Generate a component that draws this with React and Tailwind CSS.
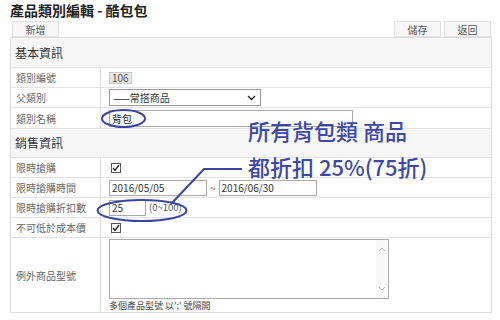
import React from "react";

const font = { fontFamily: '"Noto Sans CJK TC", "Noto Sans", sans-serif' };

function Check() {
  return (
    <span className="inline-flex h-[10px] w-[10px] items-center justify-center border border-[#555] bg-white">
      <svg width="8" height="8" viewBox="0 0 8 8">
        <path d="M1 4 L3 6.5 L7 1" fill="none" stroke="#222" strokeWidth="1.3" />
      </svg>
    </span>
  );
}

function Row({ label, h = "h-[20px]", children }) {
  return (
    <div className={`grid grid-cols-[90px_1fr] border-t border-[#e2e2e2] ${h}`}>
      <div className="flex items-center border-r border-[#e2e2e2] pl-[5px] text-[10px] text-[#666]">{label}</div>
      <div className="flex items-center pl-[8px] text-[10px] text-[#333]">{children}</div>
    </div>
  );
}

function Section({ title }) {
  return (
    <div className="flex h-[29px] items-center border-t border-[#e2e2e2] bg-[#f6f6f6] pl-[4px] text-[12px] text-[#333] first:border-t-0">
      {title}
    </div>
  );
}

function Btn({ children, w = "w-[47px]" }) {
  return (
    <button className={`flex h-[16px] items-center justify-center border border-[#e0e0e0] bg-[#f7f7f7] text-[10px] text-[#555] ${w}`}>
      {children}
    </button>
  );
}

export default function App() {
  return (
    <div className="relative h-[320px] w-[500px] overflow-hidden bg-white" style={font}>
      <div className="pl-[10px] pt-[1px] text-[14px] font-bold leading-[18px] text-[#222]">產品類別編輯 - 酷包包</div>

      <div className="mt-[2px] flex items-center justify-between pl-[12px] pr-[9px]">
        <Btn>新增</Btn>
        <div className="flex gap-[3px]">
          <Btn>儲存</Btn>
          <Btn>返回</Btn>
        </div>
      </div>

      <div className="ml-[10px] w-[482px] border border-[#dcdcdc]">
        <Section title="基本資訊" />
        <Row label="類別編號">
          <span className="flex h-[12px] items-center border border-[#c8c8c8] bg-[#e6e6e6] px-[2px] text-[10px] text-[#555]">106</span>
        </Row>
        <Row label="父類別">
          <div className="flex h-[17px] w-[152px] items-center justify-between border border-[#999] bg-white pl-[3px] pr-[4px] text-[10px] text-[#333]">
            <span>——常搭商品</span>
            <svg width="9" height="6" viewBox="0 0 9 6">
              <path d="M1 1 L4.5 4.5 L8 1" fill="none" stroke="#222" strokeWidth="1.3" />
            </svg>
          </div>
        </Row>
        <Row label="類別名稱" h="h-[21px]">
          <div className="flex h-[17px] w-[244px] items-center border border-[#aaa] bg-white pl-[2px] text-[10px] text-[#222]">背包</div>
        </Row>

        <Section title="銷售資訊" />
        <Row label="限時搶購">
          <span className="ml-[2px]"><Check /></span>
        </Row>
        <Row label="限時搶購時間">
          <div className="flex items-center">
            <div className="flex h-[16px] w-[98px] items-center border border-[#aaa] pl-[2px] text-[10px]">2016/05/05</div>
            <span className="px-[3px] text-[10px] text-[#555]">~</span>
            <div className="flex h-[16px] w-[98px] items-center border border-[#aaa] pl-[2px] text-[10px]">2016/06/30</div>
          </div>
        </Row>
        <Row label="限時搶購折扣數">
          <div className="flex items-center">
            <div className="flex h-[16px] w-[37px] items-center border border-[#aaa] pl-[2px] text-[10px]">25</div>
            <span className="pl-[3px] text-[9.5px] text-[#555]">(0~100)</span>
          </div>
        </Row>
        <Row label="不可低於成本價">
          <span className="ml-[2px]"><Check /></span>
        </Row>
        <div className="grid h-[75px] grid-cols-[90px_1fr] border-t border-[#e2e2e2]">
          <div className="flex items-center border-r border-[#e2e2e2] pl-[5px] text-[10px] text-[#666]">例外商品型號</div>
          <div className="pl-[8px] pt-[1px]">
            <div className="flex h-[60px] w-[280px] justify-end border border-[#aaa] bg-white">
              <div className="flex w-[12px] flex-col items-center justify-between bg-[#f8f8f8] py-[7px]">
                <svg width="8" height="5" viewBox="0 0 8 5">
                  <path d="M1 4 L4 1 L7 4" fill="none" stroke="#bbb" strokeWidth="1" />
                </svg>
                <svg width="8" height="5" viewBox="0 0 8 5">
                  <path d="M1 1 L4 4 L7 1" fill="none" stroke="#bbb" strokeWidth="1" />
                </svg>
              </div>
            </div>
            <div className="mt-[1px] text-[9px] leading-[12px] text-[#444]">多個產品型號 以';' 號隔開</div>
          </div>
        </div>
      </div>

      <svg className="absolute left-0 top-0" width="500" height="320" viewBox="0 0 500 320">
        <ellipse cx="123.5" cy="118.5" rx="21.5" ry="8.5" fill="none" stroke="#3a45a0" strokeWidth="2" />
        <ellipse cx="142" cy="210.5" rx="44.5" ry="10.5" fill="none" stroke="#3a45a0" strokeWidth="2" />
        <polyline points="171,204 204,169 242,169" fill="none" stroke="#3a45a0" strokeWidth="2" />
      </svg>
      <div className="absolute left-[248px] top-[119px] text-[22px] font-medium leading-[22px] text-[#3d48a8]">所有背包類 商品</div>
      <div className="absolute left-[248px] top-[155px] text-[22px] font-medium leading-[22px] text-[#3d48a8]">都折扣 25%(75折)</div>
    </div>
  );
}
